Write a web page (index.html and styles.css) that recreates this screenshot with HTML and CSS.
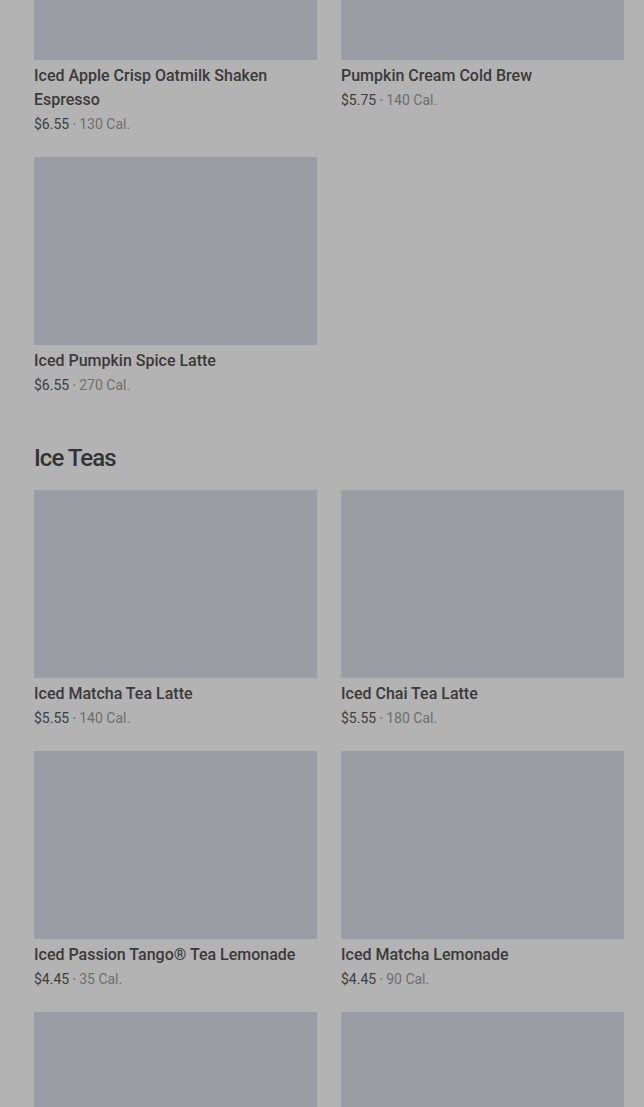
FILE: index.html
```html
<!DOCTYPE html>
<html lang="en">
<head>
    <meta charset="UTF-8">
    <meta name="viewport" content="width=device-width, initial-scale=1.0">
    <title>Menu</title>
    <link rel="stylesheet" href="styles.css">
</head>
<body>
    <div class="menu">
        <section class="category">
            <div class="grid first">
                <div class="card">
                    <div class="thumb"></div>
                    <h3 class="name">Iced Apple Crisp Oatmilk Shaken Espresso</h3>
                    <p class="meta"><span class="price">$6.55</span> <span class="dot">•</span> <span class="cal">130 Cal.</span></p>
                </div>
                <div class="card">
                    <div class="thumb"></div>
                    <h3 class="name">Pumpkin Cream Cold Brew</h3>
                    <p class="meta"><span class="price">$5.75</span> <span class="dot">•</span> <span class="cal">140 Cal.</span></p>
                </div>
                <div class="card">
                    <div class="thumb"></div>
                    <h3 class="name">Iced Pumpkin Spice Latte</h3>
                    <p class="meta"><span class="price">$6.55</span> <span class="dot">•</span> <span class="cal">270 Cal.</span></p>
                </div>
            </div>
        </section>

        <section class="category">
            <h2 class="title">Ice Teas</h2>
            <div class="grid">
                <div class="card">
                    <div class="thumb"></div>
                    <h3 class="name">Iced Matcha Tea Latte</h3>
                    <p class="meta"><span class="price">$5.55</span> <span class="dot">•</span> <span class="cal">140 Cal.</span></p>
                </div>
                <div class="card">
                    <div class="thumb"></div>
                    <h3 class="name">Iced Chai Tea Latte</h3>
                    <p class="meta"><span class="price">$5.55</span> <span class="dot">•</span> <span class="cal">180 Cal.</span></p>
                </div>
                <div class="card">
                    <div class="thumb"></div>
                    <h3 class="name">Iced Passion Tango® Tea Lemonade</h3>
                    <p class="meta"><span class="price">$4.45</span> <span class="dot">•</span> <span class="cal">35 Cal.</span></p>
                </div>
                <div class="card">
                    <div class="thumb"></div>
                    <h3 class="name">Iced Matcha Lemonade</h3>
                    <p class="meta"><span class="price">$4.45</span> <span class="dot">•</span> <span class="cal">90 Cal.</span></p>
                </div>
                <div class="card">
                    <div class="thumb"></div>
                </div>
                <div class="card">
                    <div class="thumb"></div>
                </div>
            </div>
        </section>
    </div>
</body>
</html>
```

FILE: styles.css
```css
html, body {
    margin: 0;
    padding: 0;
    height: 100%;
    overflow: hidden;
}
body {
    font-family: Roboto, "Noto Sans", sans-serif;
    background-color: #b3b3b3;
    color: #393939;
}
.menu {
    padding: 0 20px 0 34px;
    margin-top: -128px;
}
.category {
    margin-bottom: 45px;
}
.title {
    margin: 0 0 16px;
    font-size: 24px;
    line-height: 32px;
    font-weight: 500;
    letter-spacing: -0.04em;
    color: #333;
}
.grid {
    display: grid;
    grid-template-columns: 1fr 1fr;
    column-gap: 24px;
    row-gap: 21px;
}
.thumb {
    height: 188px;
    background-color: #9a9da3;
}
.name {
    margin: 4px 0 0;
    font-size: 16px;
    line-height: 24px;
    font-weight: 500;
    letter-spacing: 0;
    color: #3a3a3a;
}
.meta {
    margin: 0;
    font-size: 14px;
    line-height: 24px;
}
.price {
    color: #3e3e3e;
}
.dot {
    color: #777;
    font-size: 9px;
    line-height: 0;
    vertical-align: 2px;
}
.cal {
    color: #6e6e6e;
}
```
